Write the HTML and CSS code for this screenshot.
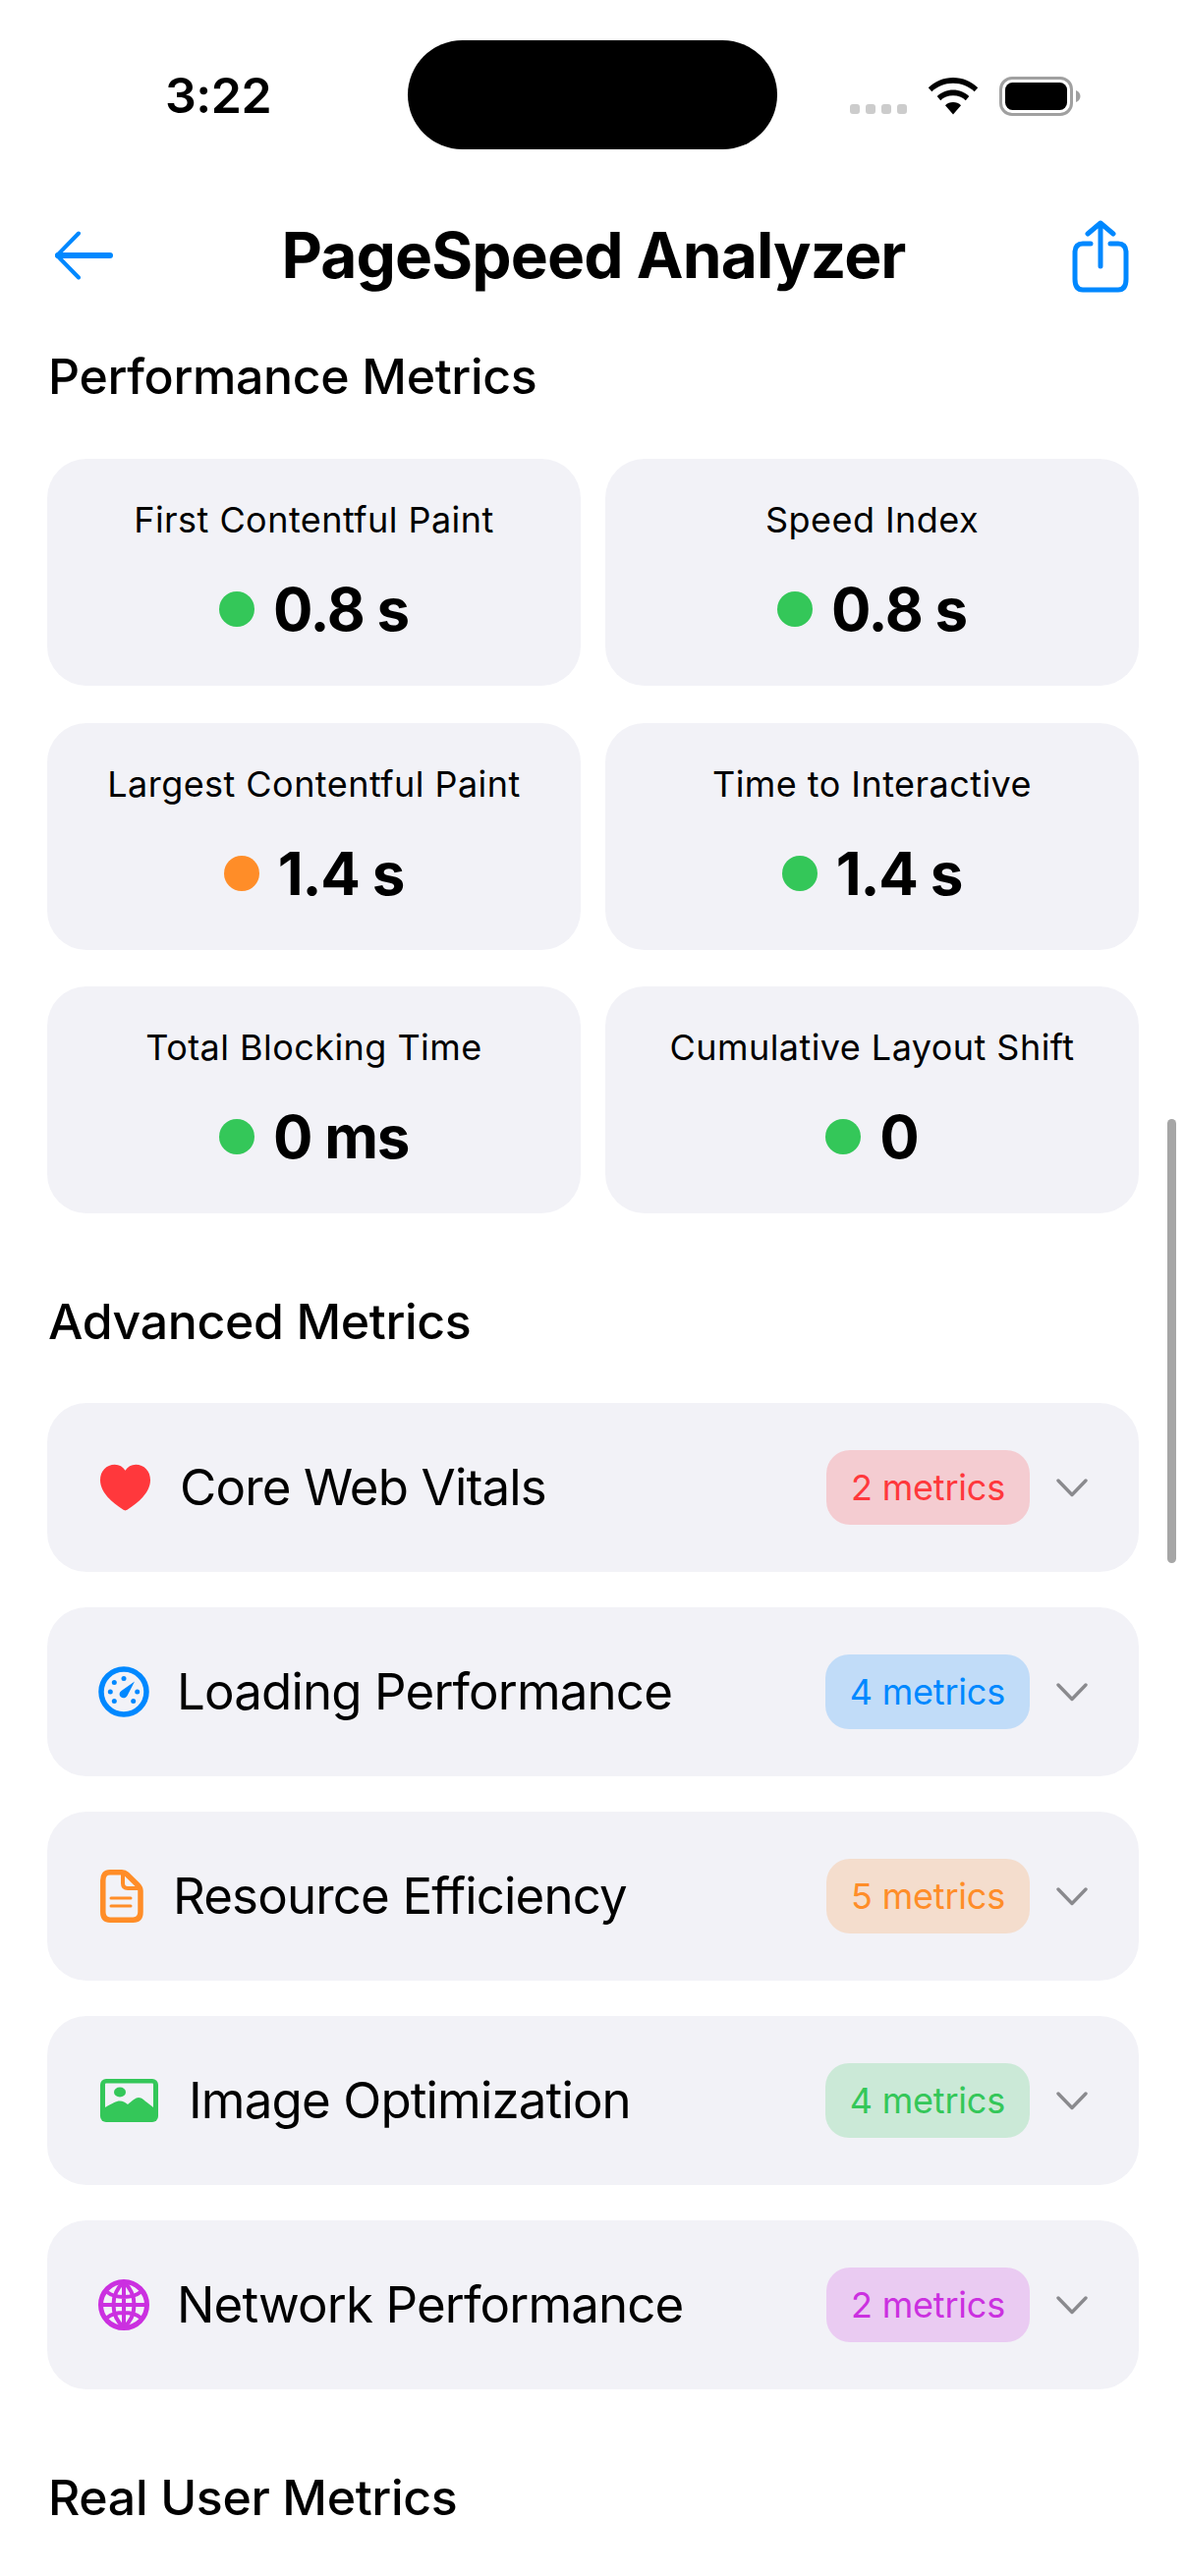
FILE: index.html
```html
<!DOCTYPE html>
<html lang="en">
<head>
<meta charset="utf-8">
<title>PageSpeed Analyzer</title>
<link rel="stylesheet" href="styles.css">
</head>
<body>
<div class="phone">
  <div class="status">
    <div class="time">3:22</div>
    <div class="island"></div>
    <div class="status-right">
      <div class="dots"><i></i><i></i><i></i><i></i></div>
      <svg class="wifi" width="52" height="38" viewBox="0 0 52 38"><path d="M26 0C16 0 7.500 3.800 .8 10.200L4.300 14.300C10 9 17.600 5.800 26 5.800S42 9 47.700 14.300L51.200 10.200C44.500 3.800 36 0 26 0Z"/><path d="M26 12.500C19.700 12.500 14 15 9.700 19L13.200 23.200C16.500 20.200 21 18.300 26 18.300S35.500 20.200 38.800 23.200L42.300 19C38 15 32.300 12.500 26 12.500Z"/><path d="M26 25C23 25 20 26.200 18 28.200L26 37.500L34 28.200C32 26.200 29 25 26 25Z"/></svg>
      <svg class="battery" width="84" height="40" viewBox="0 0 84 40"><rect x="1.500" y="1.500" width="72" height="37" rx="11.500" fill="none" stroke="#a0a0a0" stroke-width="3"/><rect x="6" y="6" width="63" height="28" rx="7.500" fill="#000"/><path d="M78 14C81 15 82.500 17.500 82.500 20S81 25 78 26Z" fill="#a0a0a0"/></svg>
    </div>
  </div>

  <header class="nav">
    <svg class="back" width="62" height="50" viewBox="0 0 62 50" fill="none" stroke="#0088ff" stroke-linecap="round" stroke-linejoin="round"><path d="M25 2.500L3 25L25 47.500" stroke-width="4"/><path d="M4 25H57" stroke-width="6"/></svg>
    <h1 class="title">PageSpeed Analyzer</h1>
    <svg class="share" width="62" height="74" viewBox="0 0 62 74" fill="none" stroke="#0088ff" stroke-width="5" stroke-linecap="round" stroke-linejoin="round"><path d="M19 24H11C5.500 24 3 27 3 33V60C3 67 5.500 71 11 71H47C52.500 71 55 67 55 60V33C55 27 52.500 24 47 24H39"/><path d="M29 47V3M16 14L29 3L42 14"/></svg>
  </header>

  <main class="content">
    <h2 class="section first">Performance Metrics</h2>
    <div class="grid">
      <div class="card"><div class="label">First Contentful Paint</div><div class="value"><span class="dot good"></span>0.8 s</div></div>
      <div class="card"><div class="label">Speed Index</div><div class="value"><span class="dot good"></span>0.8 s</div></div>
      <div class="card"><div class="label">Largest Contentful Paint</div><div class="value"><span class="dot warn"></span>1.4 s</div></div>
      <div class="card"><div class="label">Time to Interactive</div><div class="value"><span class="dot good"></span>1.4 s</div></div>
      <div class="card"><div class="label">Total Blocking Time</div><div class="value"><span class="dot good"></span>0 ms</div></div>
      <div class="card"><div class="label">Cumulative Layout Shift</div><div class="value"><span class="dot good"></span>0</div></div>
    </div>

    <h2 class="section second">Advanced Metrics</h2>
    <div class="list">
      <div class="row">
        <svg class="ic ic-heart" width="55" height="48" viewBox="0 0 55 48"><path fill="#ff383c" d="M27.500 47.500C26.800 47.500 25.800 47 24.800 46.300C11 37.300 2 27.300 2 16.500C2 7.300 8.300 .8 16.800 .8C21.500 .8 25 3 27.500 6.800C30 3 33.500 .8 38.200 .8C46.700 .8 53 7.300 53 16.500C53 27.300 44 37.300 30.200 46.300C29.200 47 28.200 47.500 27.500 47.500Z"/></svg>
        <span class="name">Core Web Vitals</span>
        <span class="badge red">2 metrics</span>
        <svg class="chev" width="32" height="19" viewBox="0 0 32 19"><path d="M2 2L16 16.500L30 2" fill="none" stroke="#8a8a8e" stroke-width="3.400" stroke-linecap="round" stroke-linejoin="round"/></svg>
      </div>
      <div class="row">
        <svg class="ic" width="52" height="52" viewBox="0 0 52 52" fill="#0088ff"><circle cx="26" cy="26" r="23" fill="none" stroke="#0088ff" stroke-width="5.500"/><circle cx="26" cy="12.500" r="2.500"/><circle cx="16.300" cy="16.500" r="2.500"/><circle cx="12.300" cy="26" r="2.500"/><circle cx="16.300" cy="35.500" r="2.500"/><circle cx="39.700" cy="26" r="2.500"/><circle cx="35.700" cy="35.500" r="2.500"/><path d="M37 15.500L29.500 30C28 32.500 25 33 23 31.300C21 29.500 21.300 26.500 23.500 25Z"/></svg>
        <span class="name">Loading Performance</span>
        <span class="badge blue">4 metrics</span>
        <svg class="chev" width="32" height="19" viewBox="0 0 32 19"><path d="M2 2L16 16.500L30 2" fill="none" stroke="#8a8a8e" stroke-width="3.400" stroke-linecap="round" stroke-linejoin="round"/></svg>
      </div>
      <div class="row">
        <svg class="ic ic-doc" width="48" height="54" viewBox="0 0 48 54" fill="none" stroke="#ff8d28"><path d="M12 2.800H24C26 2.800 27.500 3.300 29 4.800L40 15.500C42 17.500 43 19 43 21.500V43C43 48.500 40.500 51.200 35.500 51.200H12C7 51.200 4.800 48.500 4.800 43V11C4.800 5.500 7 2.800 12 2.800Z" stroke-width="5.500"/><path d="M25 3V14C25 17.500 27 19 30 19H42" stroke-width="4"/><path d="M13 29H33M13 37H33" stroke-width="3" stroke-linecap="round"/></svg>
        <span class="name">Resource Efficiency</span>
        <span class="badge orange">5 metrics</span>
        <svg class="chev" width="32" height="19" viewBox="0 0 32 19"><path d="M2 2L16 16.500L30 2" fill="none" stroke="#8a8a8e" stroke-width="3.400" stroke-linecap="round" stroke-linejoin="round"/></svg>
      </div>
      <div class="row">
        <svg class="ic ic-photo" width="64" height="44" viewBox="0 0 64 44"><rect x="2" y="0" width="59" height="44" rx="6" fill="#34c759"/><path fill="#f2f2f7" d="M7 5.500C7 5 7.500 4.500 8 4.500H55C55.500 4.500 56 5 56 5.500V29L49 23.500C47 22 44.500 19 41 19C38 19 35 22 30 26C27 24 25.500 22.500 22 22.500C18 22.500 14.500 25 7 29Z"/><ellipse cx="22" cy="13.500" rx="6" ry="5" fill="#34c759"/></svg>
        <span class="name">Image Optimization</span>
        <span class="badge green">4 metrics</span>
        <svg class="chev" width="32" height="19" viewBox="0 0 32 19"><path d="M2 2L16 16.500L30 2" fill="none" stroke="#8a8a8e" stroke-width="3.400" stroke-linecap="round" stroke-linejoin="round"/></svg>
      </div>
      <div class="row">
        <svg class="ic" width="52" height="52" viewBox="0 0 52 52" fill="none" stroke="#cb30e0"><circle cx="26" cy="26" r="23.500" stroke-width="5"/><path d="M26 3C19 9 15.500 17 15.500 26S19 43 26 49C33 43 36.500 35 36.500 26S33 9 26 3Z" stroke-width="4"/><path d="M26 3V49M9 13C14 17 20 18 26 18S38 17 43 13M3 26H49M9 39C14 35 20 34 26 34S38 35 43 39" stroke-width="4"/></svg>
        <span class="name">Network Performance</span>
        <span class="badge purple">2 metrics</span>
        <svg class="chev" width="32" height="19" viewBox="0 0 32 19"><path d="M2 2L16 16.500L30 2" fill="none" stroke="#8a8a8e" stroke-width="3.400" stroke-linecap="round" stroke-linejoin="round"/></svg>
      </div>
    </div>

    <h2 class="section third">Real User Metrics</h2>
  </main>

  <div class="scrollbar"></div>
</div>
</body>
</html>
```
FILE: styles.css
```css
* { box-sizing: border-box; }
html, body { margin: 0; padding: 0; background: #fff; }
body { font-family: Inter, "Liberation Sans", sans-serif; color: #000; }
.phone { position: relative; width: 1206px; height: 2622px; overflow: hidden; background: #fff; }

.status { display: grid; grid-template-columns: 415px 376px 415px; height: 152px; align-items: end; }
.time { font-size: 50px; font-weight: 600; line-height: 50px; margin: 0 0 30px 168px; letter-spacing: -0.5px; }
.island { height: 111px; background: #000; border-radius: 56px; }
.status-right { display: flex; align-items: flex-end; height: 74px; padding: 0 0 35px 74px; }
.dots { display: flex; gap: 6px; margin-bottom: 1px; }
.dots i { width: 10px; height: 10px; border-radius: 3px; background: #cccccc; }
.wifi { margin-left: 21px; }
.battery { margin-left: 21px; margin-bottom: -1px; }

.nav { display: flex; align-items: center; justify-content: space-between; height: 74px; margin-top: 72px; padding: 0 53px 0 55px; }
.title { margin: -3px 0 0; font-size: 64px; font-weight: 700; letter-spacing: -0.9px; line-height: 74px; }
.back { margin-top: -2px; }

.content { padding: 0 47px 0 48px; }
.section { margin: 0; padding-left: 1px; font-size: 50px; font-weight: 550; letter-spacing: -0.35px; line-height: 60px; }
.section.first { margin-top: 55px; }
.section.second { margin-top: 80px; }
.section.third { margin-top: 80px; }

.grid { display: grid; grid-template-columns: 1fr 1fr; gap: 37.500px 25px; margin-top: 54px; }
.card { height: 231px; background: #f2f2f7; border-radius: 40px; padding: 40px 16px 0; text-align: center; }
.label { font-size: 36px; line-height: 44px; letter-spacing: 0.45px; }
.value { display: flex; align-items: center; justify-content: center; gap: 19px; margin-top: 33px; font-size: 60px; font-weight: 700; line-height: 72px; letter-spacing: -1.2px; }
.dot { width: 36px; height: 36px; border-radius: 50%; }
.dot.good { background: #34c759; }
.dot.warn { background: #ff8d28; }

.list { display: flex; flex-direction: column; gap: 36px; margin-top: 53px; }
.row { display: flex; align-items: center; height: 172px; background: #f2f2f7; border-radius: 40px; padding: 0 52px; }
.ic { flex: none; }
.name { margin-left: 28px; font-size: 51px; font-weight: 420; letter-spacing: -0.85px; line-height: 62px; }
.badge { margin-left: auto; display: flex; align-items: center; height: 76px; padding: 0 25px; border-radius: 24px; font-size: 36px; letter-spacing: -0.2px; }
.chev { flex: none; margin-left: 27px; }
.red { color: #ff383c; background: rgba(255, 56, 60, .2); }
.blue { color: #0088ff; background: rgba(0, 136, 255, .2); }
.orange { color: #ff8d28; background: rgba(255, 141, 40, .2); }
.green { color: #34c759; background: rgba(52, 199, 89, .2); }
.purple { color: #cb30e0; background: rgba(203, 48, 224, .2); }

.scrollbar { position: absolute; left: 1188px; top: 1139px; width: 9px; height: 452px; border-radius: 5px; background: #a6a6a6; }
```
